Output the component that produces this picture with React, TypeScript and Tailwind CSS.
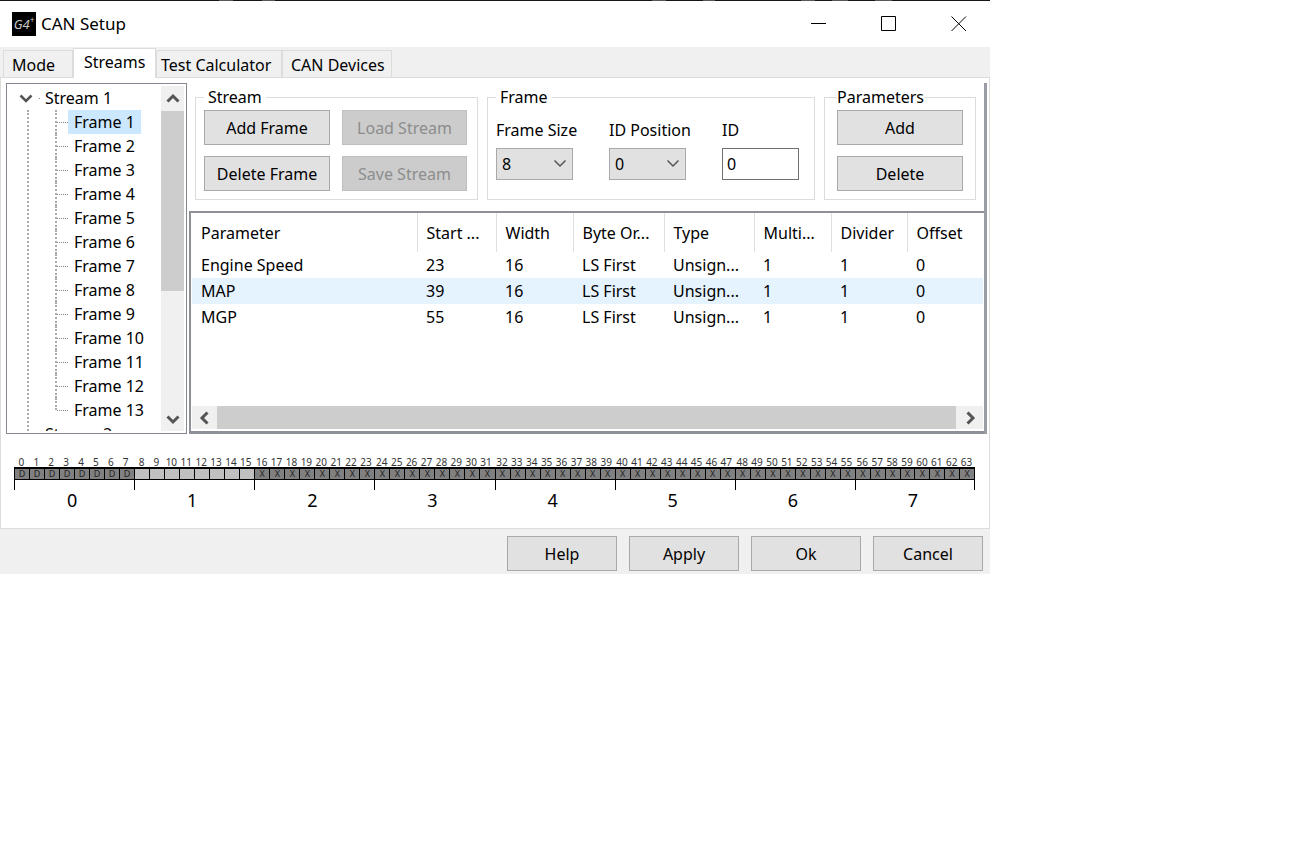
import { useState } from "react";

const frames = Array.from({ length: 13 }, (_, i) => `Frame ${i + 1}`);

const tabs = [
  { name: "Mode", className: "w-[70px] pl-2" },
  { name: "Streams", className: "w-[83px] pl-2.5" },
  { name: "Test Calculator", className: "w-[126px] pl-1" },
  { name: "CAN Devices", className: "w-[110px] pl-2" },
];

const columns = [
  { name: "Parameter", className: "w-[225px]" },
  { name: "Start ...", className: "w-[79px]" },
  { name: "Width", className: "w-[77px]" },
  { name: "Byte Or...", className: "w-[91px]" },
  { name: "Type", className: "w-[90px]" },
  { name: "Multi...", className: "w-[77px]" },
  { name: "Divider", className: "w-[76px]" },
  { name: "Offset", className: "" },
];

const rows = [
  ["Engine Speed", "23", "16", "LS First", "Unsign...", "1", "1", "0"],
  ["MAP", "39", "16", "LS First", "Unsign...", "1", "1", "0"],
  ["MGP", "55", "16", "LS First", "Unsign...", "1", "1", "0"],
];

function Chevron({ className, width = 3 }: { className?: string; width?: number }) {
  return (
    <svg viewBox="0 0 14 14" className={`size-3.5 ${className ?? ""}`} fill="none" stroke="#555" strokeWidth={width}>
      <path d="M1.5 4.5 L7 10 L12.5 4.5" />
    </svg>
  );
}

function Button({ children, className, disabled }: { children: string; className: string; disabled?: boolean }) {
  return (
    <button
      type="button"
      disabled={disabled}
      className={`h-[35px] border border-[#a9a9a9] bg-[#e1e1e1] disabled:border-[#bfbfbf] disabled:bg-[#cccccc] disabled:text-[#8c8c8c] ${className}`}
    >
      {children}
    </button>
  );
}

function Dropdown({ id, label, value }: { id: string; label: string; value: string }) {
  return (
    <div className="w-[77px]">
      <label htmlFor={id} className="block whitespace-nowrap leading-5">
        {label}
      </label>
      <div className="relative mt-2">
        <select
          id={id}
          defaultValue={value}
          className="block h-8 w-full appearance-none border border-[#a9a9a9] bg-[#e1e1e1] pl-[5px]"
        >
          {Array.from({ length: 9 }, (_, i) => (
            <option key={i}>{i}</option>
          ))}
        </select>
        <Chevron width={1.5} className="pointer-events-none absolute right-1.5 top-2" />
      </div>
    </div>
  );
}

function TitleBar() {
  return (
    <header>
      {/* Window edge */}
      <svg className="block h-px w-full bg-[#1a1418]" fill="#5a565a">
        <path d="M219 0h14v1h-14z M262 0h13v1h-13z M652 0h14v1h-14z M703 0h12v1h-12z M801 0h14v1h-14z M832 0h16v1h-16z M875 0h17v1h-17z" />
      </svg>
      <div className="flex h-[46px] items-center pl-3">
        <span className="flex size-6 items-center justify-center bg-black text-[13px] italic leading-none text-[#c8c8c8]">
          G4<sup className="text-[8px]">+</sup>
        </span>
        <h1 className="ml-[5px] flex-1 text-[17px]">CAN Setup</h1>
        <div className="flex items-center gap-[54px] pr-[23px]">
          <button type="button" aria-label="Minimize">
            <svg className="size-4" viewBox="0 0 16 16" stroke="#000">
              <path d="M0 7.5 H15" />
            </svg>
          </button>
          <button type="button" aria-label="Maximize">
            <svg className="size-4" viewBox="0 0 16 16" fill="none" stroke="#000">
              <path d="M0.5 0.5 H14.5 V14.5 H0.5 Z" />
            </svg>
          </button>
          <button type="button" aria-label="Close">
            <svg className="size-4" viewBox="0 0 16 16" stroke="#000">
              <path d="M0.5 0.5 L15 15 M15 0.5 L0.5 15" />
            </svg>
          </button>
        </div>
      </div>
    </header>
  );
}

function StreamTree() {
  return (
    <div className="flex h-[351px] w-[181px] shrink-0 border border-[#828790] py-0.5 pr-0.5">
      <div className="flex-1 overflow-hidden">
        <div className="flex h-6 items-center pl-3">
          <Chevron width={2.5} />
          <span className="ml-1.5 w-px border-t border-[#888]" />
          <span className="ml-[5px]">Stream 1</span>
        </div>
        <div className="ml-5 border-l-2 border-dotted border-[#aaa]">
          <ul className="pl-[26px]">
            {frames.map((frame, i) => (
              <li key={frame} className="flex h-6 items-center">
                <span
                  className={`self-start border-l-2 border-dotted border-[#aaa] ${
                    i === frames.length - 1 ? "h-3" : "h-6"
                  }`}
                />
                <span className="w-[11px] border-t border-dotted border-[#888]" />
                <span className={`h-6 px-1.5 leading-6 ${i === 0 ? "bg-[#cce8ff]" : ""}`}>{frame}</span>
              </li>
            ))}
          </ul>
          <div className="h-6 pl-4 leading-6">Stream 2</div>
        </div>
      </div>
      <div className="flex w-[23px] flex-col items-center bg-[#f0f0f0]">
        <div className="flex h-[25px] items-center">
          <Chevron className="rotate-180" />
        </div>
        <div className="h-[180px] w-full bg-[#cdcdcd]" />
        <div className="mt-auto flex h-6 items-center">
          <Chevron />
        </div>
      </div>
    </div>
  );
}

function ParameterTable() {
  return (
    <div className="flex flex-1 flex-col border-b-[3px] border-l-2 border-t-2 border-[#8e9097] px-px">
      <table className="w-full table-fixed text-left">
        <thead>
          <tr>
            {columns.map((column) => (
              <th
                key={column.name}
                className={`h-[39px] border-r border-[#e0e0e0] pl-[9px] font-normal last:border-r-0 ${column.className}`}
              >
                {column.name}
              </th>
            ))}
          </tr>
        </thead>
        <tbody>
          {rows.map((row) => (
            <tr key={row[0]} className={row[0] === "MAP" ? "bg-[#e5f3ff]" : ""}>
              {row.map((cell, i) => (
                <td key={i} className="h-[26px] whitespace-nowrap pl-[9px] leading-5">
                  {cell}
                </td>
              ))}
            </tr>
          ))}
        </tbody>
      </table>
      <div className="mb-0.5 mt-auto flex h-[23px] items-center bg-[#f0f0f0]">
        <div className="flex w-[25px] justify-center">
          <Chevron className="rotate-90" />
        </div>
        <div className="h-full flex-1 bg-[#cdcdcd]" />
        <div className="flex w-[27px] justify-center">
          <Chevron className="-rotate-90" />
        </div>
      </div>
    </div>
  );
}

function BitRuler() {
  return (
    <div className="flex pb-[18px] pl-[13px] pr-3.5 pt-[22px]">
      {Array.from({ length: 8 }, (_, byte) => (
        <div key={byte} className="flex-1">
          <div className="flex h-[11px] pr-px text-[10px] leading-[12px] text-[#333]">
            {Array.from({ length: 8 }, (_, bit) => (
              <span key={bit} className="flex w-0 flex-1 justify-center">
                {byte * 8 + bit}
              </span>
            ))}
          </div>
          <div className={`border-l border-black ${byte === 7 ? "border-r" : ""}`}>
            <div className="flex h-[13px] border-b border-t-2 border-black text-[9px] leading-[10px] text-[#222]">
              {Array.from({ length: 8 }, (_, bit) => (
                <span
                  key={bit}
                  className={`flex w-0 flex-1 justify-center border-r border-black last:border-r-0 ${
                    byte === 1 ? "bg-[#c0c0c0]" : "bg-[#808080]"
                  }`}
                >
                  {byte === 0 ? "D" : byte === 1 ? "" : "X"}
                </span>
              ))}
            </div>
            <div className="h-2.5" />
          </div>
          <div className="pr-1 text-center text-[18px] leading-5">{byte}</div>
        </div>
      ))}
    </div>
  );
}

export default function App() {
  const [activeTab, setActiveTab] = useState("Streams");

  return (
    <div className="min-h-screen bg-white">
      <div className="w-full max-w-[990px] bg-white font-['Noto_Sans','Open_Sans',sans-serif] text-[16px] leading-5 text-black">
        <TitleBar />

        {/* Tabs */}
        <nav className="flex h-[30px] items-end bg-[#f0f0f0] pl-[3px]">
          {tabs.map((tab) => (
            <button
              key={tab.name}
              type="button"
              onClick={() => setActiveTab(tab.name)}
              className={`whitespace-nowrap border border-b-0 border-[#dcdcdc] text-left ${
                tab.name === activeTab ? "relative -mb-px h-[30px] bg-white pb-1" : "h-[27px] bg-[#f0f0f0] pt-0.5"
              } ${tab.className}`}
            >
              {tab.name}
            </button>
          ))}
        </nav>

        <main className="border border-[#dcdcdc]">
          <div className="flex gap-0.5 pl-[5px] pr-0.5 pt-[5px]">
            <StreamTree />
            <div className="flex flex-1 flex-col border-r-[3px] border-[#9a9da3]">
              <div className="flex gap-[9px] pb-[11px] pl-1.5 pr-2 pt-1">
                <fieldset className="border border-[#dcdcdc] px-2 pb-2">
                  <legend className="px-1">Stream</legend>
                  <div className="grid grid-cols-[126px_125px] gap-x-3 gap-y-[11px] pr-0.5 pt-[3px]">
                    <Button className="w-full">Add Frame</Button>
                    <Button className="w-full" disabled>Load Stream</Button>
                    <Button className="w-full">Delete Frame</Button>
                    <Button className="w-full" disabled>Save Stream</Button>
                  </div>
                </fieldset>

                <fieldset className="flex-1 border border-[#dcdcdc] px-2">
                  <legend className="px-1">Frame</legend>
                  <div className="flex gap-9 pt-[13px]">
                    <Dropdown id="frame-size" label="Frame Size" value="8" />
                    <Dropdown id="id-position" label="ID Position" value="0" />
                    <div className="w-[77px]">
                      <label htmlFor="frame-id" className="block leading-5">
                        ID
                      </label>
                      <input
                        id="frame-id"
                        defaultValue="0"
                        className="mt-2 block h-8 w-full border border-[#707070] pl-1"
                      />
                    </div>
                  </div>
                </fieldset>

                <fieldset className="border border-[#dcdcdc] px-3 pb-2">
                  <legend>Parameters</legend>
                  <div className="flex flex-col gap-[11px] pt-[3px]">
                    <Button className="w-[126px]">Add</Button>
                    <Button className="w-[126px]">Delete</Button>
                  </div>
                </fieldset>
              </div>
              <ParameterTable />
            </div>
          </div>
          <BitRuler />
        </main>

        <footer className="flex justify-end gap-3 bg-[#f0f0f0] pb-[3px] pr-[7px] pt-[7px]">
          <Button className="w-[110px]">Help</Button>
          <Button className="w-[110px]">Apply</Button>
          <Button className="w-[110px]">Ok</Button>
          <Button className="w-[110px]">Cancel</Button>
        </footer>
      </div>
    </div>
  );
}
